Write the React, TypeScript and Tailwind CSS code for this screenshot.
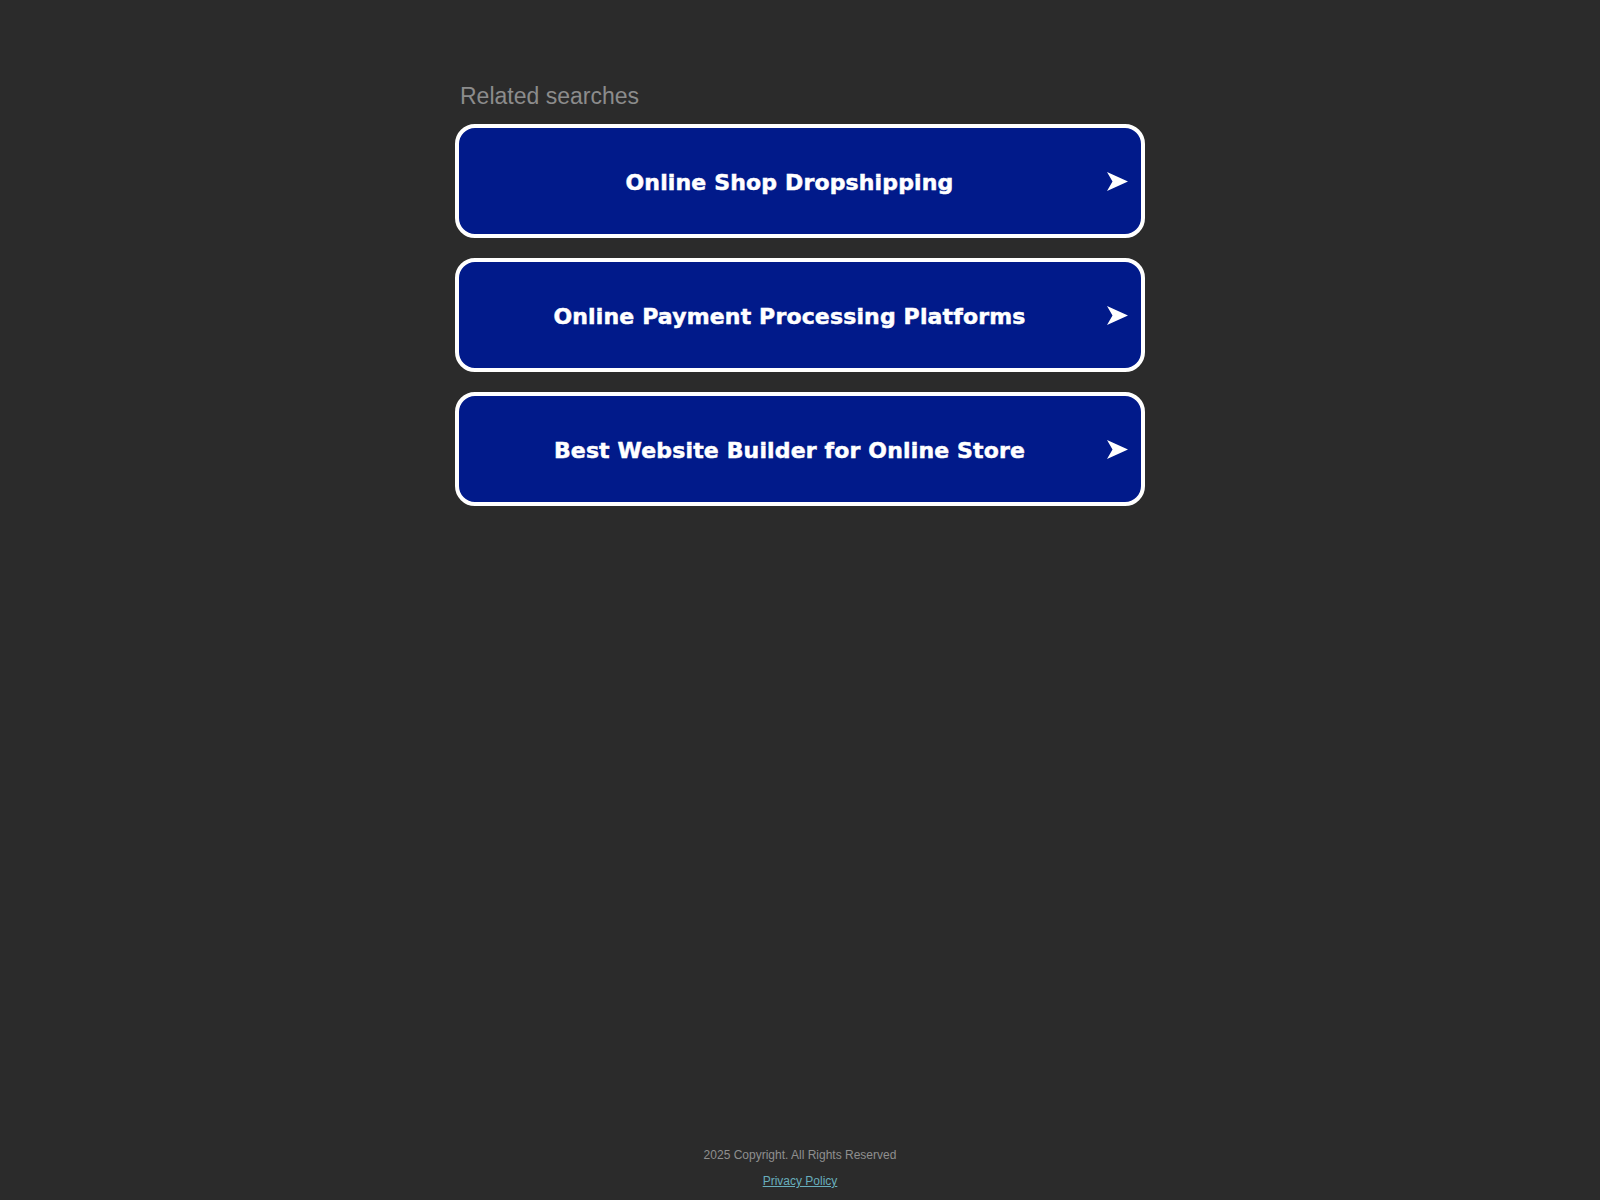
const searches = [
  'Online Shop Dropshipping',
  'Online Payment Processing Platforms',
  'Best Website Builder for Online Store',
];

function Arrow() {
  return (
    <svg width="21" height="19" viewBox="0 0 21 19" className="shrink-0 ml-[7px]">
      <path d="M0 0 L21 9.5 L0 19 L5.5 9.5 Z" fill="#ffffff" />
    </svg>
  );
}

export default function App() {
  return (
    <div className="min-h-screen flex flex-col bg-[#2b2b2b]" style={{ fontFamily: '"Liberation Sans", Arial, sans-serif' }}>
      <main className="flex-1 pt-[82px]">
        <div className="w-[690px] mx-auto">
          <h2 className="pl-[5px] text-[23px] leading-[28px] text-[#8c8c8c] mb-[14px]">Related searches</h2>
          <div className="flex flex-col gap-[20px]">
            {searches.map((s) => (
              <a
                key={s}
                href="#"
                className="flex items-center h-[114px] rounded-[20px] border-4 border-white bg-[#011a8a] pl-[20px] pr-[13px]"
              >
                <span
                  className="flex-1 pt-[4px] text-center text-white font-bold text-[22px] leading-none tracking-[0.15px] [-webkit-text-stroke:0.5px_#ffffff]"
                  style={{ fontFamily: '"DejaVu Sans", Verdana, sans-serif' }}
                >
                  {s}
                </span>
                <Arrow />
              </a>
            ))}
          </div>
        </div>
      </main>
      <footer className="flex flex-col items-center gap-[8px] pb-[10px] text-[12px] leading-[18px]">
        <div className="text-[#8f8f8f]">2025 Copyright. All Rights Reserved</div>
        <a href="#" className="text-[#68aebd] underline">Privacy Policy</a>
      </footer>
    </div>
  );
}
